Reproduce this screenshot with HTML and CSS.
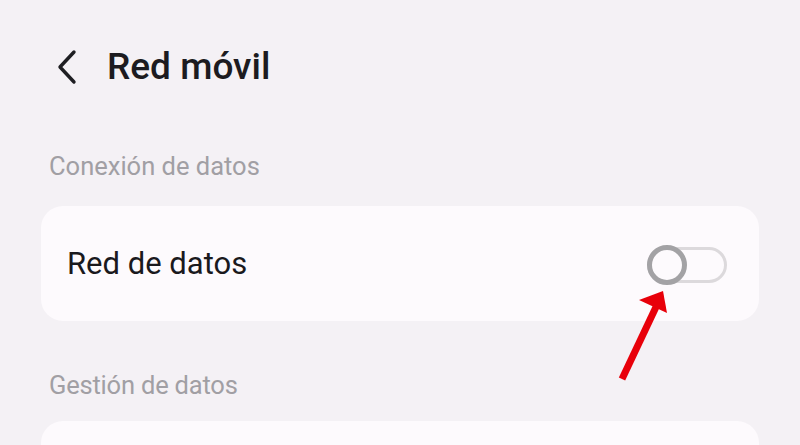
FILE: index.html
```html
<!DOCTYPE html>
<html lang="es">
<head>
<meta charset="utf-8">
<title>Red móvil</title>
<link rel="stylesheet" href="styles.css">
</head>
<body>
<div class="screen">
  <header class="topbar">
    <svg class="back" width="24" height="36" viewBox="0 0 24 36"><path d="M19 3 L5 18 L19 33" fill="none" stroke="#1e1e22" stroke-width="3.4" stroke-linecap="round" stroke-linejoin="round"/></svg>
    <h1 class="title">Red móvil</h1>
  </header>
  <div class="section-label">Conexión de datos</div>
  <div class="card">
    <span class="item-label">Red de datos</span>
    <span class="switch"><span class="thumb"></span></span>
  </div>
  <div class="section-label second">Gestión de datos</div>
  <div class="card next"></div>
  <svg class="arrow" width="70" height="100" viewBox="0 0 70 100">
    <line x1="41" y1="22" x2="7" y2="94" stroke="#e8000a" stroke-width="7"/>
    <polygon points="48,6 24,15 52,28" fill="#e8000a"/>
  </svg>
</div>
</body>
</html>
```
FILE: styles.css
```css
html, body {
  margin: 0;
  padding: 0;
  background: #f4f1f5;
}
.screen {
  position: relative;
  width: 800px;
  height: 445px;
  overflow: hidden;
  font-family: Roboto, "Noto Sans", sans-serif;
  padding: 0 41px;
  box-sizing: border-box;
}
.topbar {
  display: flex;
  align-items: center;
  height: 132px;
  padding-left: 14px;
}
.back {
  display: block;
  margin-top: 2px;
}
.title {
  margin: 0 0 0 28px;
  font-size: 37px;
  font-weight: 500;
  color: #1c1b20;
  letter-spacing: 0;
}
.section-label {
  box-sizing: border-box;
  padding: 16px 0 0 8px;
  font-size: 25.5px;
  color: #a19fa4;
  height: 74px;
  line-height: 36px;
}
.section-label.second {
  margin-top: 36px;
  padding-top: 10px;
  height: 64px;
  letter-spacing: -0.2px;
}
.card {
  background: #fdfafd;
  border-radius: 22px;
  height: 115px;
  display: flex;
  align-items: center;
  justify-content: space-between;
  padding: 0 32px 0 26px;
}
.card.next {
  height: 60px;
}
.item-label {
  font-size: 31px;
  color: #1a191d;
}
.switch {
  position: relative;
  width: 80px;
  height: 36px;
  box-sizing: border-box;
  border: 3px solid #dcd9dc;
  border-radius: 18px;
  background: #fdfafd;
  margin-top: 2px;
}
.thumb {
  position: absolute;
  left: -3px;
  top: -5px;
  width: 40px;
  height: 40px;
  box-sizing: border-box;
  border: 5px solid #a3a2a5;
  border-radius: 50%;
  background: #fdfafd;
}
.arrow {
  position: absolute;
  left: 615px;
  top: 285px;
}
```
